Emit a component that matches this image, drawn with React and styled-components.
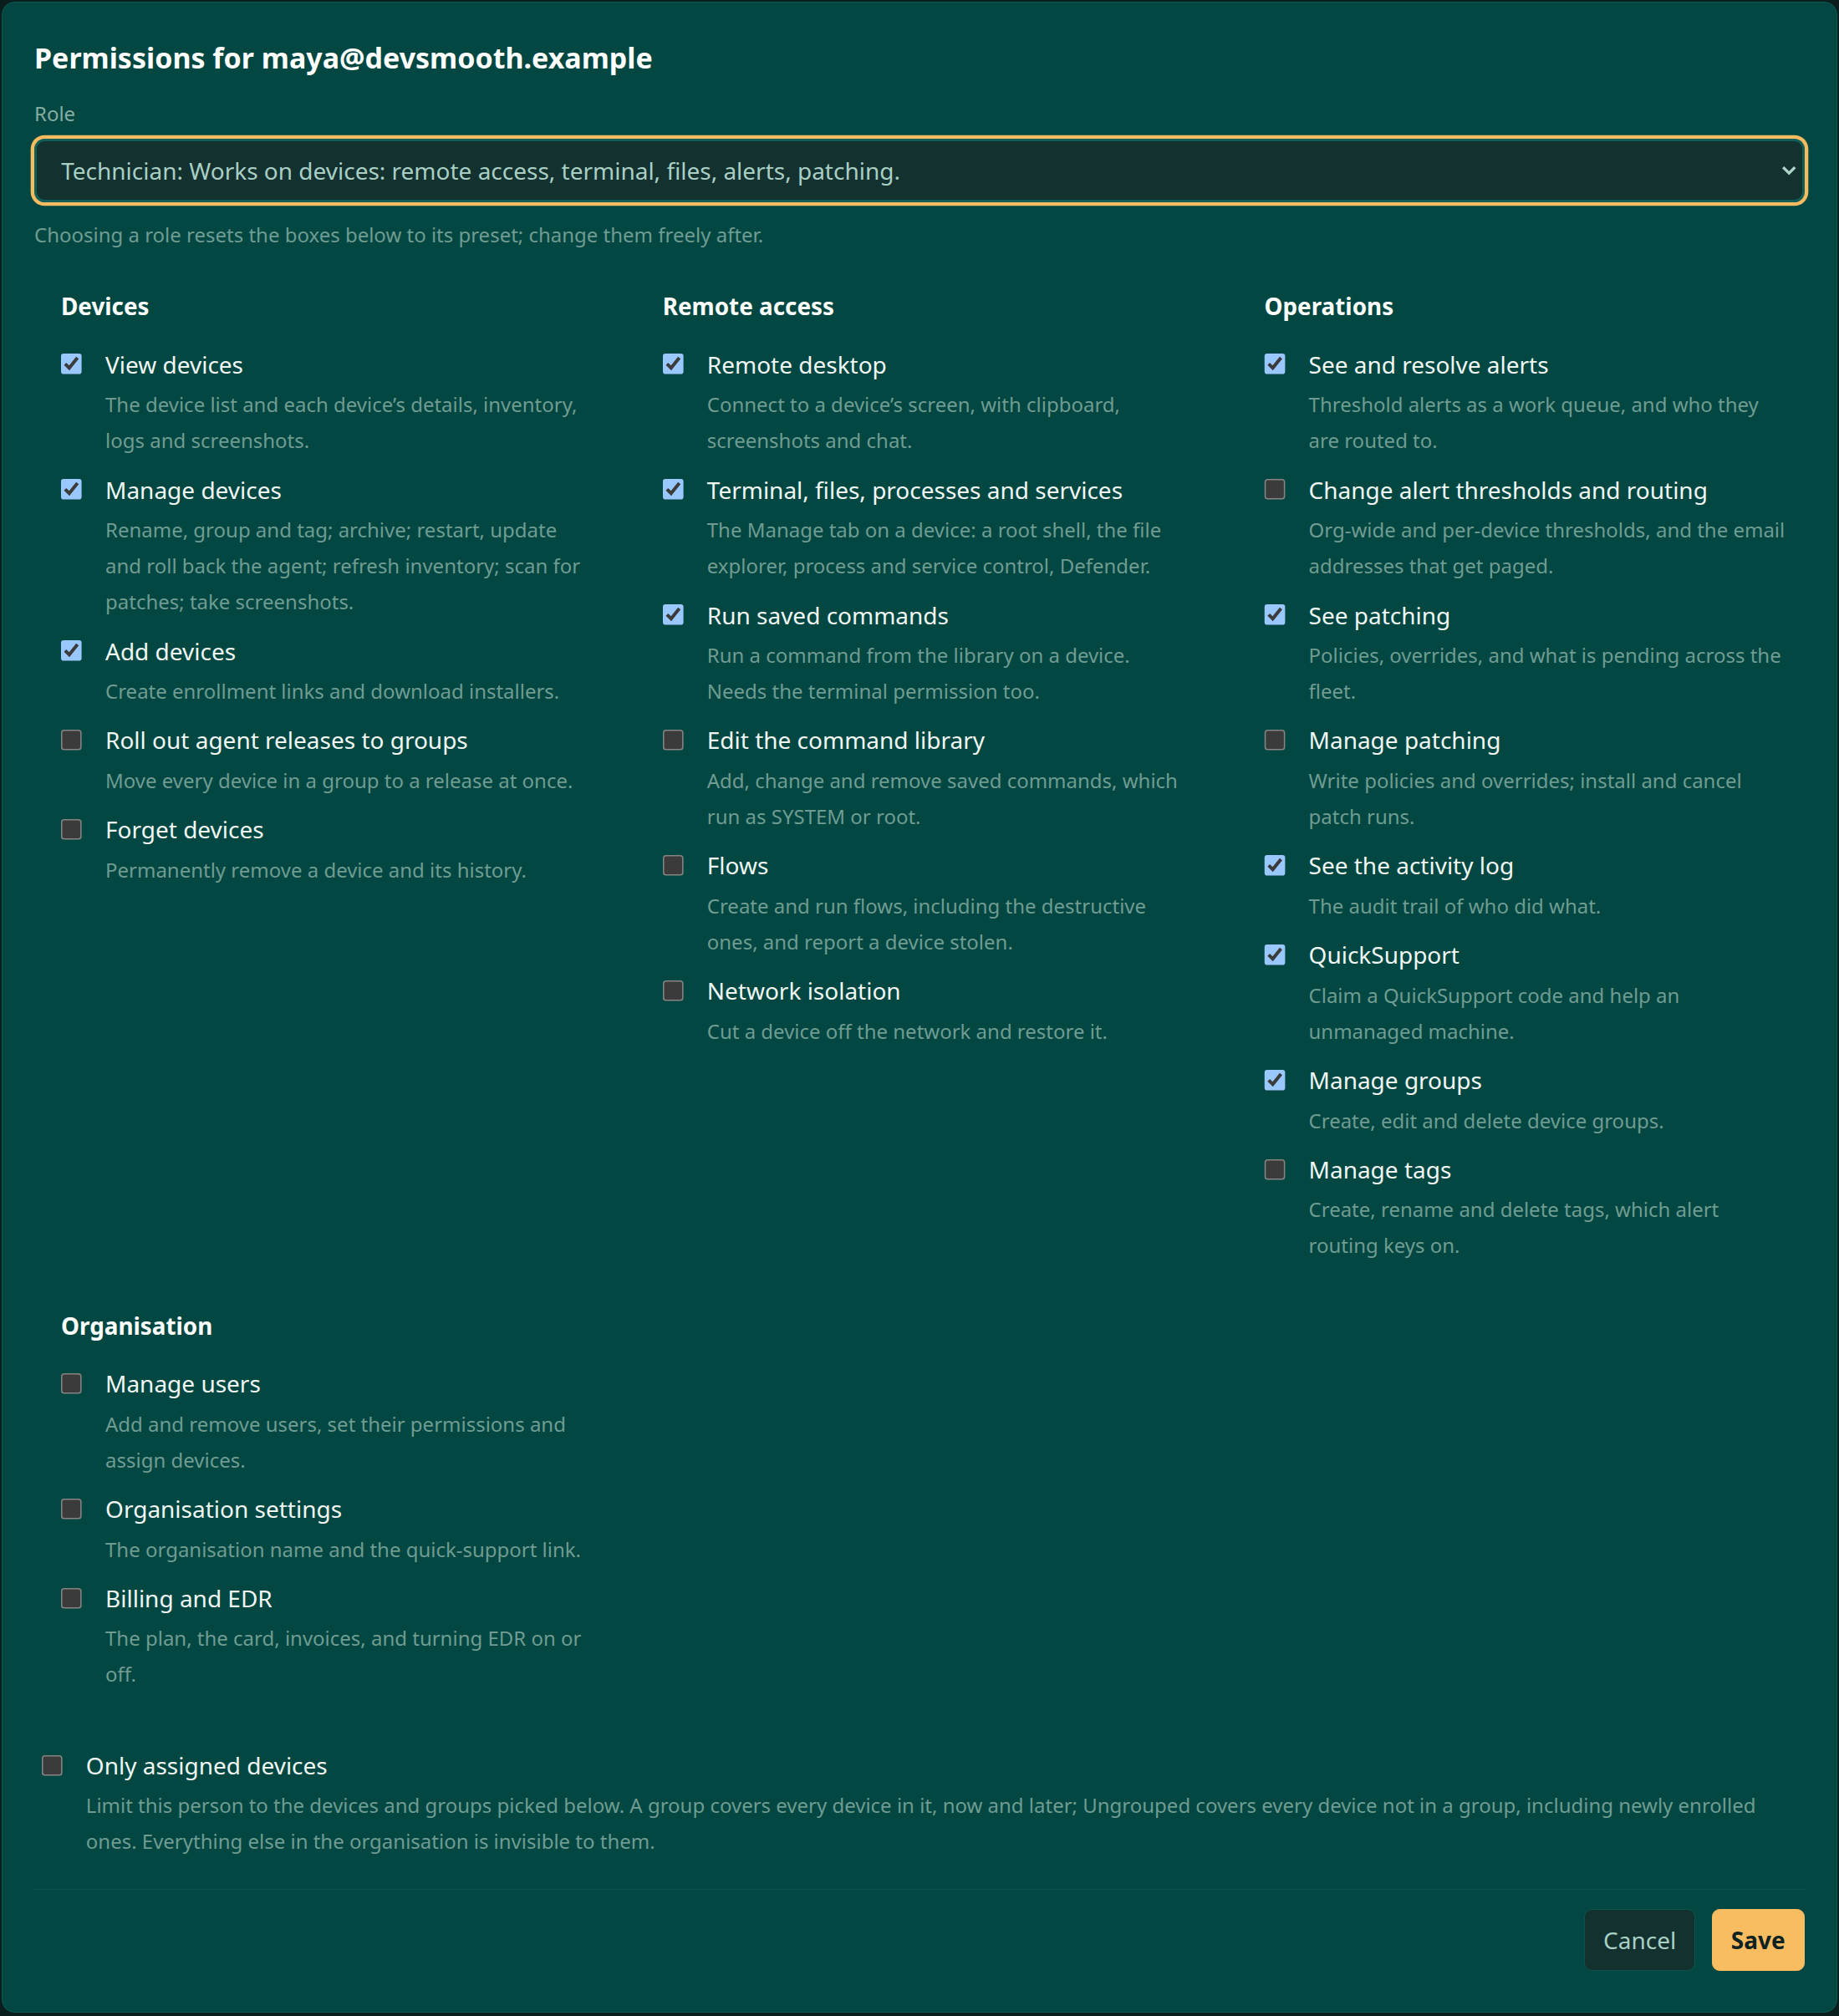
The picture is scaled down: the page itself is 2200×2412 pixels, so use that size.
import React, { useState } from 'react'
import styled, { createGlobalStyle } from 'styled-components'

const GlobalStyle = createGlobalStyle`
  html {
    zoom: 1.53846;
  }
  body {
    margin: 0;
    background: #0a1e1d;
    font-family: "Noto Sans", "Open Sans", sans-serif;
    color: #f1f7f5;
  }
  * {
    box-sizing: border-box;
  }
`

const Dialog = styled.form`
  margin: 1px;
  border: 1px solid #0f5952;
  border-radius: 10px;
  background: #024741;
  padding: 28px 25px 31.5px;
`

const Title = styled.h2`
  margin: 0;
  font-size: 22.1px;
  line-height: 30px;
  font-weight: 700;
  color: #ffffff;
`

const FieldLabel = styled.label`
  display: block;
  margin-top: 18px;
  font-size: 15.6px;
  line-height: 22px;
  color: #86ada3;
`

const SelectWrap = styled.div`
  position: relative;
  margin-top: 8.3px;
`

const Select = styled.select`
  appearance: none;
  width: 100%;
  height: 49.5px;
  padding: 0 40px 0 19px;
  border: 2px solid #0f5e57;
  border-radius: 8px;
  background: #12312f;
  color: #a9cfc5;
  font-family: inherit;
  font-size: 18.2px;
  box-shadow: 0 0 0 2.8px #f6bb60;
  outline: none;
`

const Chevron = styled.svg`
  position: absolute;
  right: 6px;
  top: 50%;
  width: 12px;
  height: 8px;
  margin-top: -4px;
  pointer-events: none;
`

const Hint = styled.p`
  margin: 14.2px 0 0;
  font-size: 15.6px;
  line-height: 22px;
  color: #6f9c92;
`

const Grid = styled.div`
  display: grid;
  grid-template-columns: repeat(3, 1fr);
  column-gap: 60.4px;
  row-gap: 35.5px;
  margin-top: 31.5px;
  padding: 0 12.8px 0 20.8px;
`

const Section = styled.section`
  min-width: 0;
  display: flex;
  flex-direction: column;
  gap: 11.5px;
`

const SectionTitle = styled.h3`
  margin: 0 0 6.5px;
  font-size: 18.1px;
  line-height: 27px;
  font-weight: 700;
  color: #ffffff;
`

const Item = styled.label`
  display: grid;
  grid-template-columns: 17px 1fr;
  column-gap: 17.5px;
  cursor: pointer;
  padding: 0 ${(p) => p.$inset || 0}px;
`

const Box = styled.input`
  width: 17px;
  height: 17px;
  margin: 5px 0 0;
  color-scheme: dark;
  cursor: pointer;
`

const ItemText = styled.span`
  display: flex;
  flex-direction: column;
  gap: 3px;
`

const ItemName = styled.span`
  font-size: 18.2px;
  line-height: 27px;
  color: #f1f7f5;
`

const ItemDesc = styled.span`
  font-size: 15.6px;
  line-height: 28px;
  color: #6f9c92;
`

const Scope = styled.div`
  margin-top: 44px;
`

const Divider = styled.hr`
  margin: 22.8px 0 0;
  border: 0;
  border-top: 1px solid #0c5a53;
`

const Footer = styled.div`
  display: flex;
  justify-content: flex-end;
  gap: 12.4px;
  margin-top: 15.3px;
`

const Button = styled.button`
  font-family: inherit;
  font-size: 18.2px;
  line-height: 27px;
  padding: 10px 14.5px;
  border-radius: 6px;
  cursor: pointer;
  border: 1px solid ${(p) => (p.$primary ? '#f8bc61' : '#0e544e')};
  background: ${(p) => (p.$primary ? '#f8bc61' : '#12312f')};
  color: ${(p) => (p.$primary ? '#0e2322' : '#a9d0c5')};
  font-weight: ${(p) => (p.$primary ? 700 : 400)};
`

const roles = [
  'Admin: Everything, including users, settings and billing.',
  'Technician: Works on devices: remote access, terminal, files, alerts, patching.',
  'Helpdesk: Views devices, remote desktop and QuickSupport.',
  'Viewer: Read-only access to devices and alerts.',
]

const sections = [
  {
    title: 'Devices',
    items: [
      { id: 'view', name: 'View devices', desc: 'The device list and each device’s details, inventory, logs and screenshots.', on: true },
      { id: 'manage', name: 'Manage devices', desc: 'Rename, group and tag; archive; restart, update and roll back the agent; refresh inventory; scan for patches; take screenshots.', on: true },
      { id: 'add', name: 'Add devices', desc: 'Create enrollment links and download installers.', on: true },
      { id: 'rollout', name: 'Roll out agent releases to groups', desc: 'Move every device in a group to a release at once.' },
      { id: 'forget', name: 'Forget devices', desc: 'Permanently remove a device and its history.' },
    ],
  },
  {
    title: 'Remote access',
    items: [
      { id: 'remote', name: 'Remote desktop', desc: 'Connect to a device’s screen, with clipboard, screenshots and chat.', on: true },
      { id: 'terminal', name: 'Terminal, files, processes and services', desc: 'The Manage tab on a device: a root shell, the file explorer, process and service control, Defender.', on: true },
      { id: 'run', name: 'Run saved commands', desc: 'Run a command from the library on a device. Needs the terminal permission too.', on: true },
      { id: 'library', name: 'Edit the command library', desc: 'Add, change and remove saved commands, which run as SYSTEM or root.' },
      { id: 'flows', name: 'Flows', desc: 'Create and run flows, including the destructive ones, and report a device stolen.' },
      { id: 'isolate', name: 'Network isolation', desc: 'Cut a device off the network and restore it.' },
    ],
  },
  {
    title: 'Operations',
    items: [
      { id: 'alerts', name: 'See and resolve alerts', desc: 'Threshold alerts as a work queue, and who they are routed to.', on: true },
      { id: 'thresholds', name: 'Change alert thresholds and routing', desc: 'Org-wide and per-device thresholds, and the email addresses that get paged.' },
      { id: 'patching', name: 'See patching', desc: 'Policies, overrides, and what is pending across the fleet.', on: true },
      { id: 'patchmanage', name: 'Manage patching', desc: 'Write policies and overrides; install and cancel patch runs.' },
      { id: 'activity', name: 'See the activity log', desc: 'The audit trail of who did what.', on: true },
      { id: 'quick', name: 'QuickSupport', desc: 'Claim a QuickSupport code and help an unmanaged machine.', on: true },
      { id: 'groups', name: 'Manage groups', desc: 'Create, edit and delete device groups.', on: true },
      { id: 'tags', name: 'Manage tags', desc: 'Create, rename and delete tags, which alert routing keys on.' },
    ],
  },
  {
    title: 'Organisation',
    items: [
      { id: 'users', name: 'Manage users', desc: 'Add and remove users, set their permissions and assign devices.' },
      { id: 'org', name: 'Organisation settings', desc: 'The organisation name and the quick-support link.' },
      { id: 'billing', name: 'Billing and EDR', desc: 'The plan, the card, invoices, and turning EDR on or off.' },
    ],
  },
]

const initial = {}
sections.forEach((s) => s.items.forEach((i) => (initial[i.id] = !!i.on)))

const Permission = ({ name, desc, checked, onToggle, inset }) => (
  <Item $inset={inset}>
    <Box type="checkbox" checked={checked} onChange={onToggle} />
    <ItemText>
      <ItemName>{name}</ItemName>
      <ItemDesc>{desc}</ItemDesc>
    </ItemText>
  </Item>
)

export default function App() {
  const [role, setRole] = useState(roles[1])
  const [perms, setPerms] = useState(initial)
  const [scoped, setScoped] = useState(false)

  const toggle = (id) => setPerms({ ...perms, [id]: !perms[id] })

  return (
    <>
      <GlobalStyle />
      <Dialog onSubmit={(e) => e.preventDefault()}>
        <Title>Permissions for maya@devsmooth.example</Title>
        <FieldLabel htmlFor="role">Role</FieldLabel>
        <SelectWrap>
          <Select id="role" value={role} onChange={(e) => setRole(e.target.value)}>
            {roles.map((r) => (
              <option key={r} value={r}>
                {r}
              </option>
            ))}
          </Select>
          <Chevron viewBox="0 0 12 8" fill="none">
            <path d="M1.4 1.4 6 6 10.6 1.4" stroke="#aed4c9" strokeWidth="2.2" />
          </Chevron>
        </SelectWrap>
        <Hint>Choosing a role resets the boxes below to its preset; change them freely after.</Hint>

        <Grid>
          {sections.map((s) => (
            <Section key={s.title}>
              <SectionTitle>{s.title}</SectionTitle>
              {s.items.map((i) => (
                <Permission
                  key={i.id}
                  name={i.name}
                  desc={i.desc}
                  checked={perms[i.id]}
                  onToggle={() => toggle(i.id)}
                />
              ))}
            </Section>
          ))}
        </Grid>

        <Scope>
          <Permission
            inset={5.7}
            name="Only assigned devices"
            desc="Limit this person to the devices and groups picked below. A group covers every device in it, now and later; Ungrouped covers every device not in a group, including newly enrolled ones. Everything else in the organisation is invisible to them."
            checked={scoped}
            onToggle={() => setScoped(!scoped)}
          />
        </Scope>

        <Divider />
        <Footer>
          <Button type="button">Cancel</Button>
          <Button type="submit" $primary>
            Save
          </Button>
        </Footer>
      </Dialog>
    </>
  )
}
